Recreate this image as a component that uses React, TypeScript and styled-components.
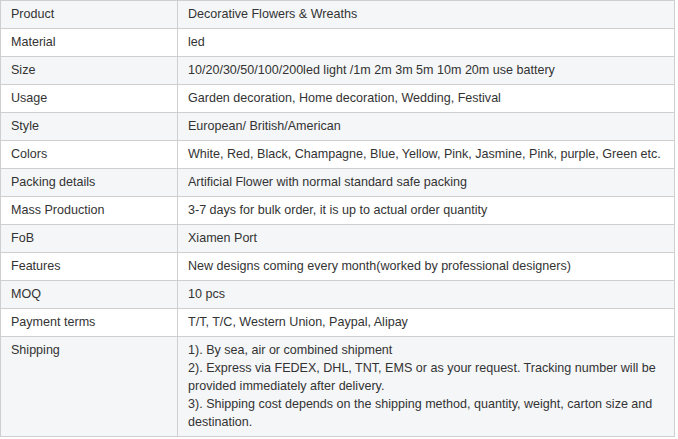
import React from "react";
import styled, {createGlobalStyle} from "styled-components";

const GlobalStyle = createGlobalStyle`
  body {
    margin: 0;
    background: #fff;
    font-family: "Liberation Sans", Arial, sans-serif;
  }
`;

const Table = styled.table`
  width: 675px;
  border-collapse: collapse;
  font-size: 12.55px;
  line-height: 18px;
  color: #333;
`;

const TR = styled.tr<{ $striped: boolean }>`
  background: ${({$striped}) => ($striped ? "#f5f6f8" : "#fff")};
`;

const TD = styled.td`
  border: 1px solid #cfcfcf;
  padding: 4px 10px 5px;
  vertical-align: top;
  text-align: left;

  &:first-of-type {
    width: 156px;
  }
`;

type Spec = { label: string, lines: string[] }

const specs: Spec[] = [
    {label: "Product", lines: ["Decorative Flowers & Wreaths"]},
    {label: "Material", lines: ["led"]},
    {label: "Size", lines: ["10/20/30/50/100/200led light /1m 2m 3m 5m 10m 20m use battery"]},
    {label: "Usage", lines: ["Garden decoration, Home decoration, Wedding, Festival"]},
    {label: "Style", lines: ["European/ British/American"]},
    {label: "Colors", lines: ["White, Red, Black, Champagne, Blue, Yellow, Pink, Jasmine, Pink, purple, Green etc."]},
    {label: "Packing details", lines: ["Artificial Flower with normal standard safe packing"]},
    {label: "Mass Production", lines: ["3-7 days for bulk order, it is up to actual order quantity"]},
    {label: "FoB", lines: ["Xiamen Port"]},
    {label: "Features", lines: ["New designs coming every month(worked by professional designers)"]},
    {label: "MOQ", lines: ["10 pcs"]},
    {label: "Payment terms", lines: ["T/T, T/C, Western Union, Paypal, Alipay"]},
    {
        label: "Shipping", lines: [
            "1). By sea, air or combined shipment",
            "2). Express via FEDEX, DHL, TNT, EMS or as your request. Tracking number will be provided immediately after delivery.",
            "3). Shipping cost depends on the shipping method, quantity, weight, carton size and destination."
        ]
    },
];

const App: React.FC = () => {
    return (
        <>
            <GlobalStyle/>
            <Table>
                <tbody>
                {
                    specs.map(({label, lines}, index) =>
                        <TR key={label} $striped={index % 2 === 0}>
                            <TD>{label}</TD>
                            <TD>
                                {
                                    lines.map((line, i) =>
                                        <React.Fragment key={i}>
                                            {i > 0 ? <br/> : null}
                                            {line}
                                        </React.Fragment>
                                    )
                                }
                            </TD>
                        </TR>
                    )
                }
                </tbody>
            </Table>
        </>
    )
};

export default App;
